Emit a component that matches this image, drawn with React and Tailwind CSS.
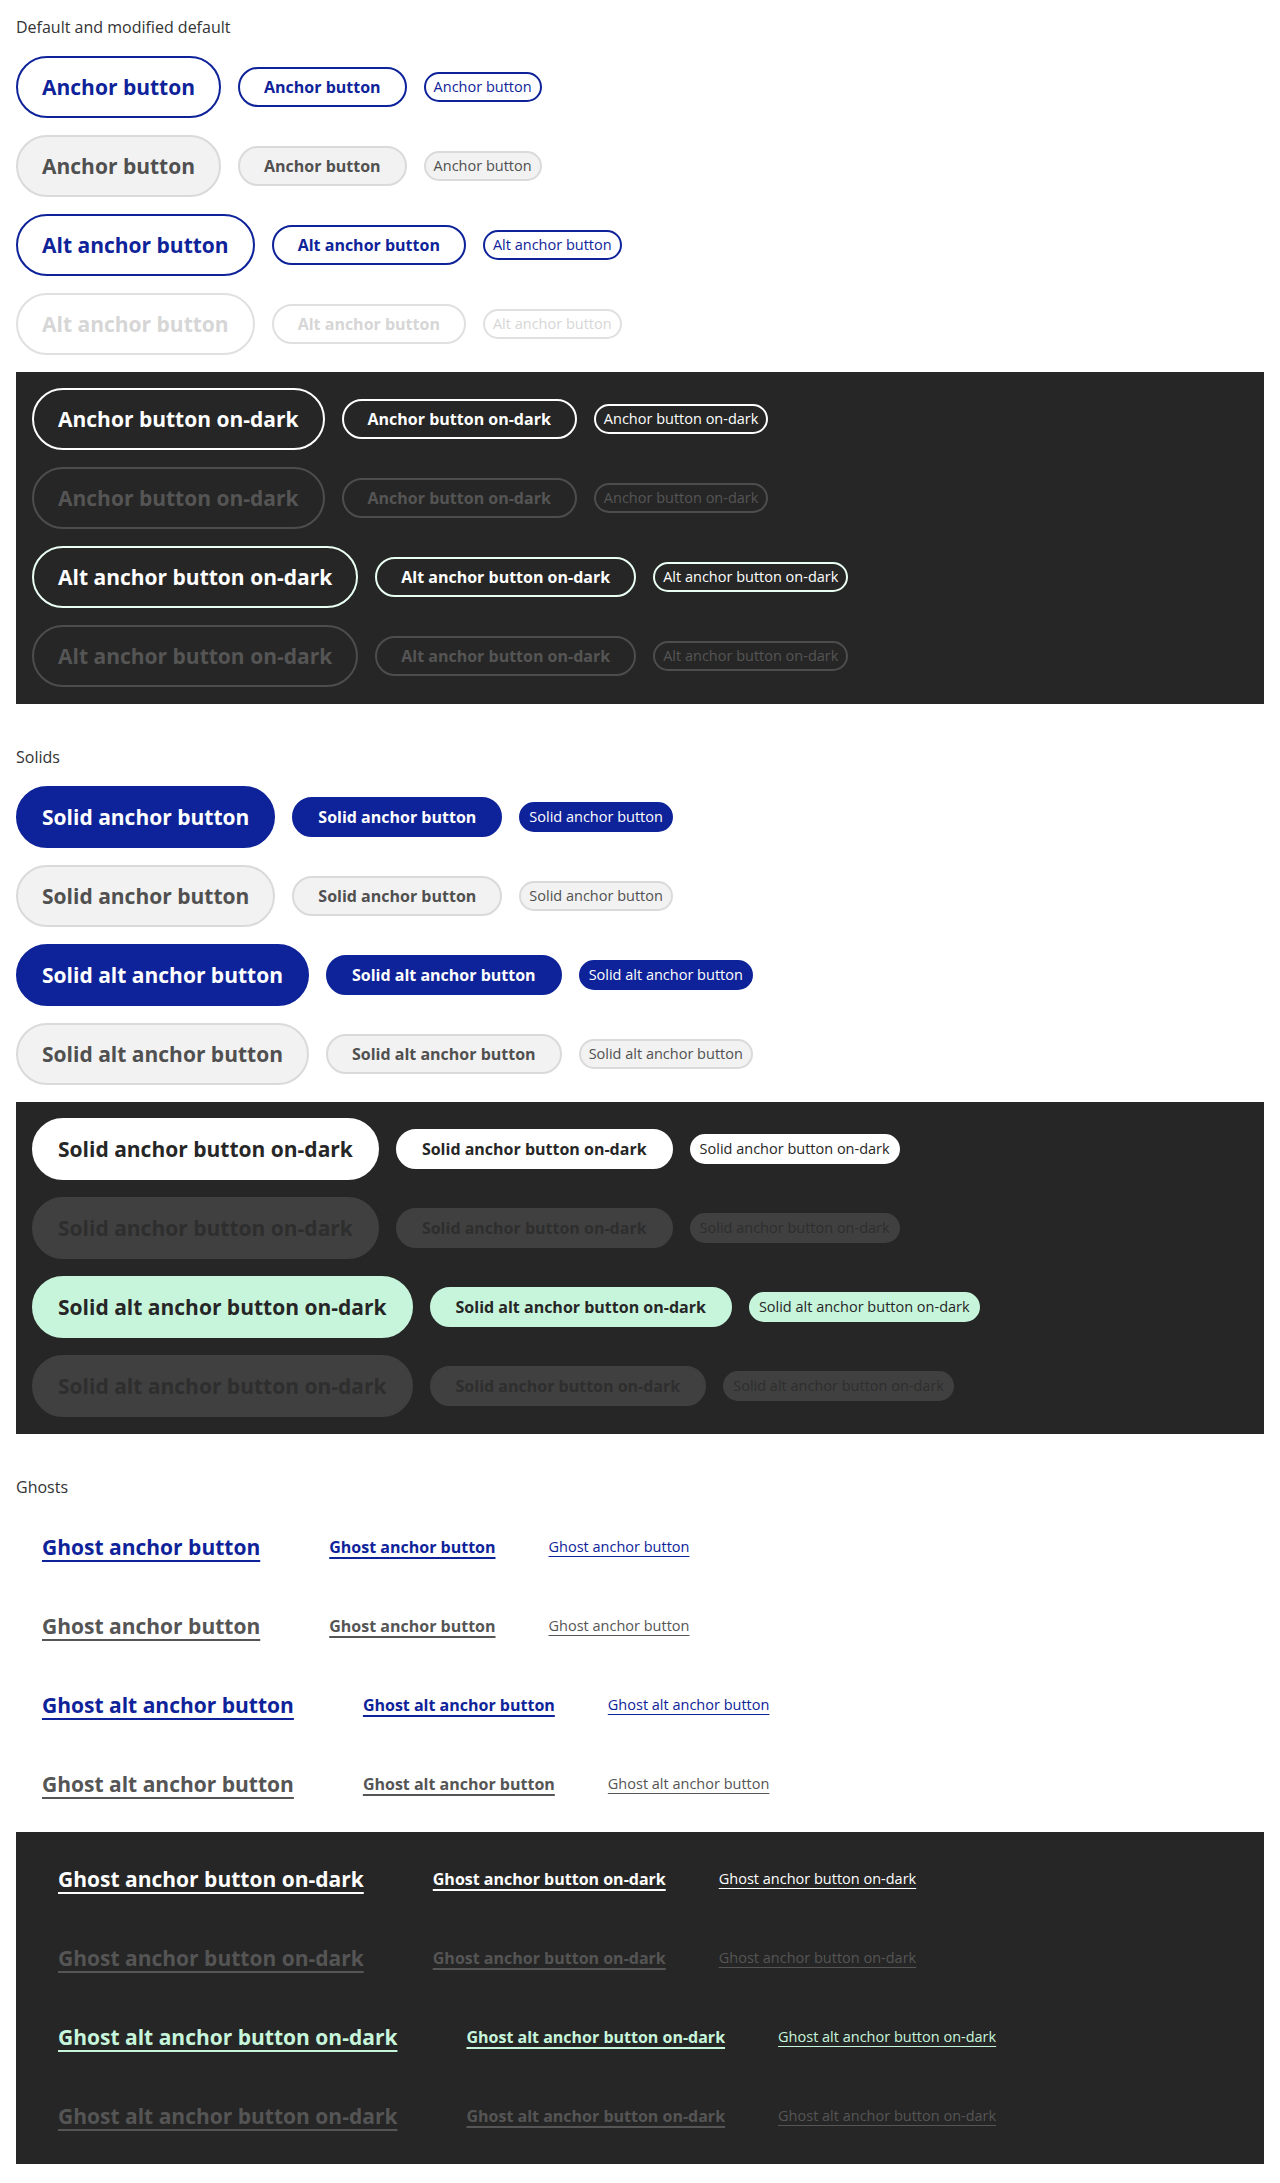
import React from "react";

const size = {
  lg: "h-[62px] px-6 text-[21px] font-bold",
  md: "h-10 px-6 text-base font-bold",
  sm: "h-[30px] px-2 text-[14.5px] font-normal",
};

const line = {
  lg: "decoration-2 underline-offset-[5px]",
  md: "decoration-[1.5px] underline-offset-[4px]",
  sm: "decoration-1 underline-offset-[4px]",
};

function Btn({ s, tone, ghost, children }) {
  return (
    <a
      href="#"
      className={`inline-flex items-center justify-center whitespace-nowrap rounded-full border-2 leading-none ${size[s]} ${tone}`}
    >
      {ghost ? <span className={`underline ${line[s]}`}>{children}</span> : children}
    </a>
  );
}

function Row({ labels, tone, ghost }) {
  return (
    <div className="flex items-center gap-[17px]">
      <Btn s="lg" tone={tone} ghost={ghost}>{labels[0]}</Btn>
      <Btn s="md" tone={tone} ghost={ghost}>{labels[1]}</Btn>
      <Btn s="sm" tone={tone} ghost={ghost}>{labels[2]}</Btn>
    </div>
  );
}

function Rows({ rows, ghost }) {
  return rows.map((r, i) => (
    <Row key={i} labels={r.labels} tone={r.tone} ghost={ghost} />
  ));
}

function Dark({ children }) {
  return (
    <div className="flex flex-col gap-[17px] bg-[#262626] px-4 pt-4 pb-[17px]">
      {children}
    </div>
  );
}

const same = (t) => [t, t, t];

const anchorLight = [
  { labels: same("Anchor button"), tone: "bg-white border-[#0e2399] text-[#0e2399]" },
  { labels: same("Anchor button"), tone: "bg-[#f2f2f2] border-[#dadada] text-[#505050]" },
  { labels: same("Alt anchor button"), tone: "bg-white border-[#0e2399] text-[#0e2399]" },
  { labels: same("Alt anchor button"), tone: "bg-white border-[#e0e0e0] text-[#d6d6d6]" },
];

const anchorDark = [
  { labels: same("Anchor button on-dark"), tone: "border-white text-white" },
  { labels: same("Anchor button on-dark"), tone: "border-[#4d4d4d] text-[#555555]" },
  { labels: same("Alt anchor button on-dark"), tone: "border-[#eafff3] text-white" },
  { labels: same("Alt anchor button on-dark"), tone: "border-[#4d4d4d] text-[#555555]" },
];

const solidLight = [
  { labels: same("Solid anchor button"), tone: "bg-[#0e2399] border-[#0e2399] text-white" },
  { labels: same("Solid anchor button"), tone: "bg-[#f2f2f2] border-[#dadada] text-[#505050]" },
  { labels: same("Solid alt anchor button"), tone: "bg-[#0e2399] border-[#0e2399] text-white" },
  { labels: same("Solid alt anchor button"), tone: "bg-[#f2f2f2] border-[#dadada] text-[#505050]" },
];

const solidDark = [
  { labels: same("Solid anchor button on-dark"), tone: "bg-white border-white text-[#262626]" },
  { labels: same("Solid anchor button on-dark"), tone: "bg-[#404040] border-[#404040] text-[#2e2e2e]" },
  { labels: same("Solid alt anchor button on-dark"), tone: "bg-[#c6f5dc] border-[#c6f5dc] text-[#262626]" },
  {
    labels: ["Solid alt anchor button on-dark", "Solid anchor button on-dark", "Solid alt anchor button on-dark"],
    tone: "bg-[#404040] border-[#404040] text-[#2e2e2e]",
  },
];

const ghostLight = [
  { labels: same("Ghost anchor button"), tone: "border-transparent text-[#0e2399]" },
  { labels: same("Ghost anchor button"), tone: "border-transparent text-[#555555]" },
  { labels: same("Ghost alt anchor button"), tone: "border-transparent text-[#0e2399]" },
  { labels: same("Ghost alt anchor button"), tone: "border-transparent text-[#555555]" },
];

const ghostDark = [
  { labels: same("Ghost anchor button on-dark"), tone: "border-transparent text-white" },
  { labels: same("Ghost anchor button on-dark"), tone: "border-transparent text-[#555555]" },
  { labels: same("Ghost alt anchor button on-dark"), tone: "border-transparent text-[#c6f5dc]" },
  { labels: same("Ghost alt anchor button on-dark"), tone: "border-transparent text-[#555555]" },
];

function Section({ title, children }) {
  return (
    <section className="flex flex-col">
      <h2 className="mb-[17px] text-base leading-6 font-normal text-[#333333]">{title}</h2>
      <div className="flex flex-col gap-[17px]">{children}</div>
    </section>
  );
}

export default function App() {
  return (
    <div
      className="min-h-[2183px] bg-white px-4 pt-[15px] pb-[17px] flex flex-col gap-[41px]"
      style={{ fontFamily: '"Open Sans", "Noto Sans", sans-serif' }}
    >
      <Section title="Default and modified default">
        <Rows rows={anchorLight} />
        <Dark>
          <Rows rows={anchorDark} />
        </Dark>
      </Section>

      <Section title="Solids">
        <Rows rows={solidLight} />
        <Dark>
          <Rows rows={solidDark} />
        </Dark>
      </Section>

      <Section title="Ghosts">
        <Rows rows={ghostLight} ghost />
        <Dark>
          <Rows rows={ghostDark} ghost />
        </Dark>
      </Section>
    </div>
  );
}
